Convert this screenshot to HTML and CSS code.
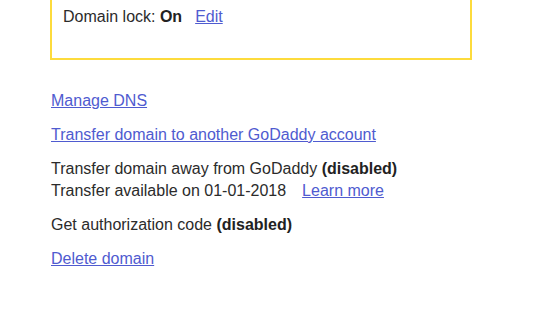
FILE: index.html
```html
<!DOCTYPE html>
<html lang="en">
<head>
<meta charset="utf-8">
<title>Domain settings</title>
<link rel="stylesheet" href="styles.css">
</head>
<body>
<main class="page">
  <section class="lock-box">
    <p class="lock-line">Domain lock: <strong>On</strong><a href="#" class="edit-link">Edit</a></p>
  </section>
  <ul class="actions">
    <li><a href="#">Manage DNS</a></li>
    <li><a href="#">Transfer domain to another GoDaddy account</a></li>
    <li>Transfer domain away from GoDaddy <strong>(disabled)</strong><br>Transfer available on 01-01-2018<a href="#" class="learn-link">Learn more</a></li>
    <li>Get authorization code <strong>(disabled)</strong></li>
    <li><a href="#">Delete domain</a></li>
  </ul>
</main>
</body>
</html>
```

FILE: styles.css
```css
html, body {
  margin: 0;
  padding: 0;
  background: #ffffff;
}
body {
  font-family: "Liberation Sans", Arial, sans-serif;
  font-size: 16px;
  line-height: 22px;
  color: #2b2b2b;
}
.page {
  padding-left: 50px;
  width: 422px;
}
.lock-box {
  margin-top: -40px;
  border: 2px solid #fddb3c;
  padding: 44px 11px 30px 11px;
}
.lock-line {
  margin: 0;
}
strong {
  font-weight: bold;
  color: #222;
}
a {
  color: #4f5bd0;
  text-decoration: underline;
}
.edit-link {
  margin-left: 13px;
}
.learn-link {
  margin-left: 16px;
}
.actions {
  list-style: none;
  margin: 30px 0 0 0;
  padding: 0 0 0 1px;
  display: flex;
  flex-direction: column;
  gap: 12px;
  white-space: nowrap;
}
.actions li {
  margin: 0;
}
```
